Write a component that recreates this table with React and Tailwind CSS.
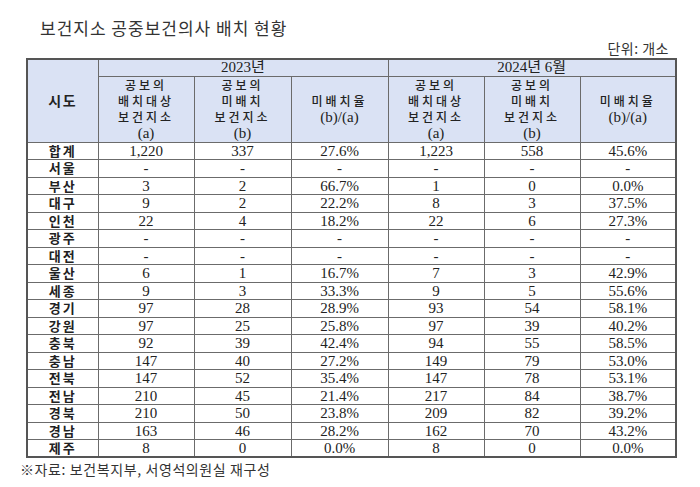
const rows = [
  ['합계', '1,220', '337', '27.6%', '1,223', '558', '45.6%'],
  ['서울', '-', '-', '-', '-', '-', '-'],
  ['부산', '3', '2', '66.7%', '1', '0', '0.0%'],
  ['대구', '9', '2', '22.2%', '8', '3', '37.5%'],
  ['인천', '22', '4', '18.2%', '22', '6', '27.3%'],
  ['광주', '-', '-', '-', '-', '-', '-'],
  ['대전', '-', '-', '-', '-', '-', '-'],
  ['울산', '6', '1', '16.7%', '7', '3', '42.9%'],
  ['세종', '9', '3', '33.3%', '9', '5', '55.6%'],
  ['경기', '97', '28', '28.9%', '93', '54', '58.1%'],
  ['강원', '97', '25', '25.8%', '97', '39', '40.2%'],
  ['충북', '92', '39', '42.4%', '94', '55', '58.5%'],
  ['충남', '147', '40', '27.2%', '149', '79', '53.0%'],
  ['전북', '147', '52', '35.4%', '147', '78', '53.1%'],
  ['전남', '210', '45', '21.4%', '217', '84', '38.7%'],
  ['경북', '210', '50', '23.8%', '209', '82', '39.2%'],
  ['경남', '163', '46', '28.2%', '162', '70', '43.2%'],
  ['제주', '8', '0', '0.0%', '8', '0', '0.0%'],
]

const kr = "font-['Noto_Sans_CJK_KR',sans-serif]"
const num = "font-['Liberation_Serif','Noto_Sans_CJK_KR',serif]"
const cell = 'border border-[#6b6b6b] p-0 text-center align-middle overflow-hidden'

function SubHead({ lines, tag }) {
  return (
    <th className={`${cell} font-normal`}>
      {lines.map(l => (
        <div key={l} className={`${kr} text-[12px] leading-[16.25px] tracking-[3px] font-medium`}>{l}</div>
      ))}
      <div className={`${num} text-[15px] leading-[16.25px]`}>{tag}</div>
    </th>
  )
}

function GroupHeads() {
  return (
    <>
      <SubHead lines={['공보의', '배치대상', '보건지소']} tag="(a)" />
      <SubHead lines={['공보의', '미배치', '보건지소']} tag="(b)" />
      <th className={`${cell} font-normal`}>
        <div className={`${kr} text-[12px] leading-[16.25px] tracking-[3px] font-medium`}>미배치율</div>
        <div className={`${num} text-[15px] leading-[16.25px]`}>(b)/(a)</div>
      </th>
    </>
  )
}

export default function App() {
  return (
    <div className="w-[700px] h-[487px] bg-white text-[#222] overflow-hidden">
      <div className={`${kr} pl-[40px] pt-[16px] text-[17px] tracking-[1px] text-[#333] leading-[24px]`}>
        보건지소 공중보건의사 배치 현황
      </div>
      <div className={`${kr} text-right pr-[31px] mt-[1px] text-[14px] tracking-[0.5px] leading-[14px] text-[#333]`}>
        단위: 개소
      </div>

      <table className="ml-[26px] mt-[3px] w-[649px] table-fixed border-collapse border-2 border-[#555]">
        <colgroup>
          <col className="w-[71px]" />
          <col className="w-[96px]" />
          <col className="w-[97px]" />
          <col className="w-[97px]" />
          <col className="w-[96px]" />
          <col className="w-[96px]" />
          <col className="w-[96px]" />
        </colgroup>
        <thead className="bg-[#dae2f4] text-[#222]">
          <tr className="h-[17px]">
            <th rowSpan={2} className={`${cell} ${kr} text-[14px] font-bold tracking-[1.5px]`}>시도</th>
            <th colSpan={3} className={`${cell} ${num} text-[15px] font-normal leading-[15px]`}>2023년</th>
            <th colSpan={3} className={`${cell} ${num} text-[15px] font-normal leading-[15px]`}>2024년 6월</th>
          </tr>
          <tr className="h-[66px]">
            <GroupHeads />
            <GroupHeads />
          </tr>
        </thead>
        <tbody>
          {rows.map(r => (
            <tr key={r[0]} className="h-[17.5px]">
              <td className={`${cell} ${kr} text-[13px] font-bold leading-[16px] tracking-[2px]`}>{r[0]}</td>
              {r.slice(1).map((v, i) => (
                <td key={i} className={`${cell} ${num} text-[15px] leading-[16px]`}>{v}</td>
              ))}
            </tr>
          ))}
        </tbody>
      </table>

      <div className={`${kr} pl-[20px] mt-[1px] text-[14px] tracking-[0.6px] leading-[20px] text-[#333]`}>
        ※자료: 보건복지부, 서영석의원실 재구성
      </div>
    </div>
  )
}
